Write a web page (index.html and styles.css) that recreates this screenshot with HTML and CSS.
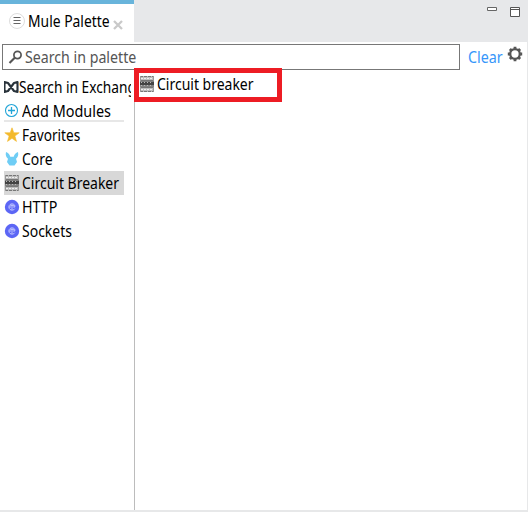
FILE: index.html
```html
<!DOCTYPE html>
<html lang="en">
<head>
<meta charset="utf-8">
<title>Mule Palette</title>
<link rel="stylesheet" href="styles.css">
</head>
<body>
<svg width="0" height="0" class="defs">
  <symbol id="breaker" viewBox="0 0 16 16">
    <path d="M1 0h14v16H1z" fill="#bdbdbd"/>
    <path d="M1 .5h14M1 15.500h14" stroke="#777" stroke-dasharray="3 1"/>
    <path d="M2 2.500h12M2 13.500h12" stroke="#eee" stroke-dasharray="2 1"/>
    <path d="M1 4.500h14M1 11.500h14" stroke="#777"/>
    <path d="M1 5.500h14v5H1z" fill="#444"/>
    <path d="M2 6.500h12" stroke="#bbb" stroke-dasharray="1 2"/>
    <path d="M1.500 9.500h13" stroke="#bbb" stroke-dasharray="2 1"/>
    <path d="M1.500 0v5M14.500 0v5M1.500 11v5M14.500 11v5" stroke="#999"/>
  </symbol>
  <symbol id="connector" viewBox="0 0 16 16">
    <circle cx="8" cy="8" r="7.200" fill="#5c66f5"/>
    <g fill="none" stroke="#c5c9ff" stroke-width=".9"><path d="M10.800 6.300A3.200 3.200 0 1 0 10.800 9.700M5 8h6M8 5v2M8 9v2M6.200 6.600h4.600v1.500"/></g>
  </symbol>
</svg>
<div class="window">
  <header class="tabs">
    <div class="tab">
      <svg class="tab-icon" width="16" height="16" viewBox="0 0 16 16"><circle cx="8" cy="8" r="7.500" fill="#fff" stroke="#ddd"/><path d="M4.500 4.500h7M4.500 7.500h7M4.500 10.500h7" stroke="#666"/></svg>
      <span class="title">Mule Palette</span>
      <svg class="close" width="10" height="10" viewBox="0 0 10 10"><path d="M1 1l8 8M9 1l-8 8" stroke="#c9c9c9" stroke-width="2.300"/></svg>
    </div>
    <div class="controls">
      <svg width="10" height="4"><path d="M.5.5h9v3h-9z" fill="#fff" stroke="#666"/></svg>
      <svg width="10" height="10"><path d="M.5.5h9v9h-9zM0 2.500h10" fill="#fff" stroke="#555"/></svg>
    </div>
  </header>
  <div class="toolbar">
    <div class="search">
      <svg width="15" height="15" viewBox="0 0 15 15"><circle cx="9.500" cy="5" r="3.600" fill="none" stroke="#555" stroke-width="1.700"/><path d="M7 7.500L1.500 13" stroke="#555" stroke-width="2.200"/></svg>
      <span class="placeholder">Search in palette</span>
    </div>
    <span class="clear">Clear</span>
    <svg class="gear" width="16" height="16" viewBox="0 0 16 16"><circle cx="8" cy="8" r="4.800" fill="none" stroke="#555" stroke-width="2.300"/><path d="M8 .8v2M8 13.200v2M.8 8h2M13.200 8h2M2.900 2.900l1.500 1.500M11.600 11.600l1.500 1.500M2.900 13.100l1.500-1.500M11.600 4.400l1.500-1.500" stroke="#555" stroke-width="2.800"/></svg>
  </div>
  <main class="panes">
    <nav class="modules">
      <div class="row exchange"><svg width="16" height="16" viewBox="0 0 16 16"><path d="M1.500 3v10L5 12 11 4l3.500-1v10L11 12 5 4z" fill="none" stroke="#28323a" stroke-width="2.100" stroke-linejoin="round"/></svg><span class="label exchange-label">Search in Exchange</span></div>
      <div class="row add"><svg width="16" height="16" viewBox="0 0 16 16"><circle cx="7.500" cy="7.500" r="6" fill="none" stroke="#22a5d8" stroke-width="1.100"/><path d="M7.500 4v7M4 7.500h7" stroke="#22a5d8" stroke-width="1.300"/></svg><span class="label modules-label">Add Modules</span></div>
      <div class="row"><svg width="16" height="16" viewBox="0 0 16 16"><path d="M8 .8l1.800 5h5.400l-4.300 3.300 1.600 5.300L8 11.300l-4.500 3.100 1.600-5.300L.8 5.800h5.400z" fill="#f3b92c" stroke="#f3b92c" stroke-width=".6"/></svg><span class="label favorites-label">Favorites</span></div>
      <div class="row"><svg width="16" height="16" viewBox="0 0 16 16"><path d="M2 1c2.300.7 3.500 2.300 4.300 4.800h3.400C10.500 3.300 11.700 1.700 14 1c.8 3.200-.2 5.300-2 6.700l1 3.300-2.500 3.500h-5L3 11l1-3.300C2.200 6.300 1.200 4.200 2 1z" fill="#6fcdf5"/></svg><span class="label">Core</span></div>
      <div class="row selected"><svg width="16" height="16"><use href="#breaker"/></svg><span class="label">Circuit Breaker</span></div>
      <div class="row"><svg width="16" height="16"><use href="#connector"/></svg><span class="label http-label">HTTP</span></div>
      <div class="row"><svg width="16" height="16"><use href="#connector"/></svg><span class="label">Sockets</span></div>
    </nav>
    <section class="results">
      <div class="result"><svg width="16" height="16"><use href="#breaker"/></svg><span class="label">Circuit breaker</span></div>
    </section>
  </main>
</div>
</body>
</html>
```
FILE: styles.css
```css
* { box-sizing: border-box; }
body {
  margin: 0;
  background: #fff;
  color: #000;
  font: 15.5px/24px "Noto Sans", "Open Sans", sans-serif;
  overflow: hidden;
}
svg { display: block; flex: none; }
span { white-space: nowrap; transform-origin: left center; }
.defs { position: absolute; }
.window {
  display: flex;
  flex-direction: column;
  width: 528px;
  height: 512px;
  border-right: 1px solid #e7e8e9;
  border-bottom: 2px solid #e7e8e9;
}
.tabs {
  display: flex;
  justify-content: space-between;
  width: 528px;
  height: 42px;
  background: #e7e8ea;
}
.tab {
  display: flex;
  width: 134px;
  border-top: 4px solid #68b4db;
  background: #fff;
  padding: 5px 0 0 9px;
}
.tab-icon { margin-top: 4px; }
.title { margin-left: 3px; width: 85px; transform: scaleX(.895); }
.close { margin-top: 11px; }
.controls { display: flex; gap: 13px; padding: 7px 8px 0 0; }
.toolbar { display: flex; height: 28px; }
.search {
  display: flex;
  width: 458px;
  height: 26px;
  margin: 2px 0 0 2px;
  padding: 0 0 0 5px;
  border: 1px solid #777;
}
.search svg { margin-top: 5px; }
.placeholder { margin-left: 2px; line-height: 25px; color: #555; transform: scaleX(.915); }
.clear { width: 39px; margin-left: 8px; line-height: 30px; color: #3696fa; transform: scaleX(.92); }
.gear { margin-top: 4px; }
.panes { display: flex; flex: 1; }
.modules { width: 135px; border-right: 1px solid #bcbcbc; padding: 5px 3px 0 4px; }
.row { display: flex; align-items: center; gap: 2px; width: 120px; height: 24px; }
.label { transform: scaleX(.902); }
.modules-label { transform: scaleX(.93); }
.favorites-label { transform: scaleX(.88); }
.http-label { transform: scaleX(.92); }
.exchange-label { transform: scaleX(.885); }
.exchange { width: 127px; gap: 0; overflow: hidden; }
.exchange svg { margin: 0 0 0 -1px; }
.add { background: linear-gradient(#e7e7e7, #e7e7e7) 0 21px / 100% 2px no-repeat; }
.selected { background: #d8d8d8; }
.results { flex: 1; }
.result {
  display: flex;
  align-items: center;
  gap: 2px;
  position: relative;
  left: -1px;
  top: -2px;
  width: 148px;
  height: 34px;
  border: 5px solid #ed1c24;
  background: #fff;
}
.result svg { margin-top: -2px; }
.result .label { margin-top: -2px; }
```
